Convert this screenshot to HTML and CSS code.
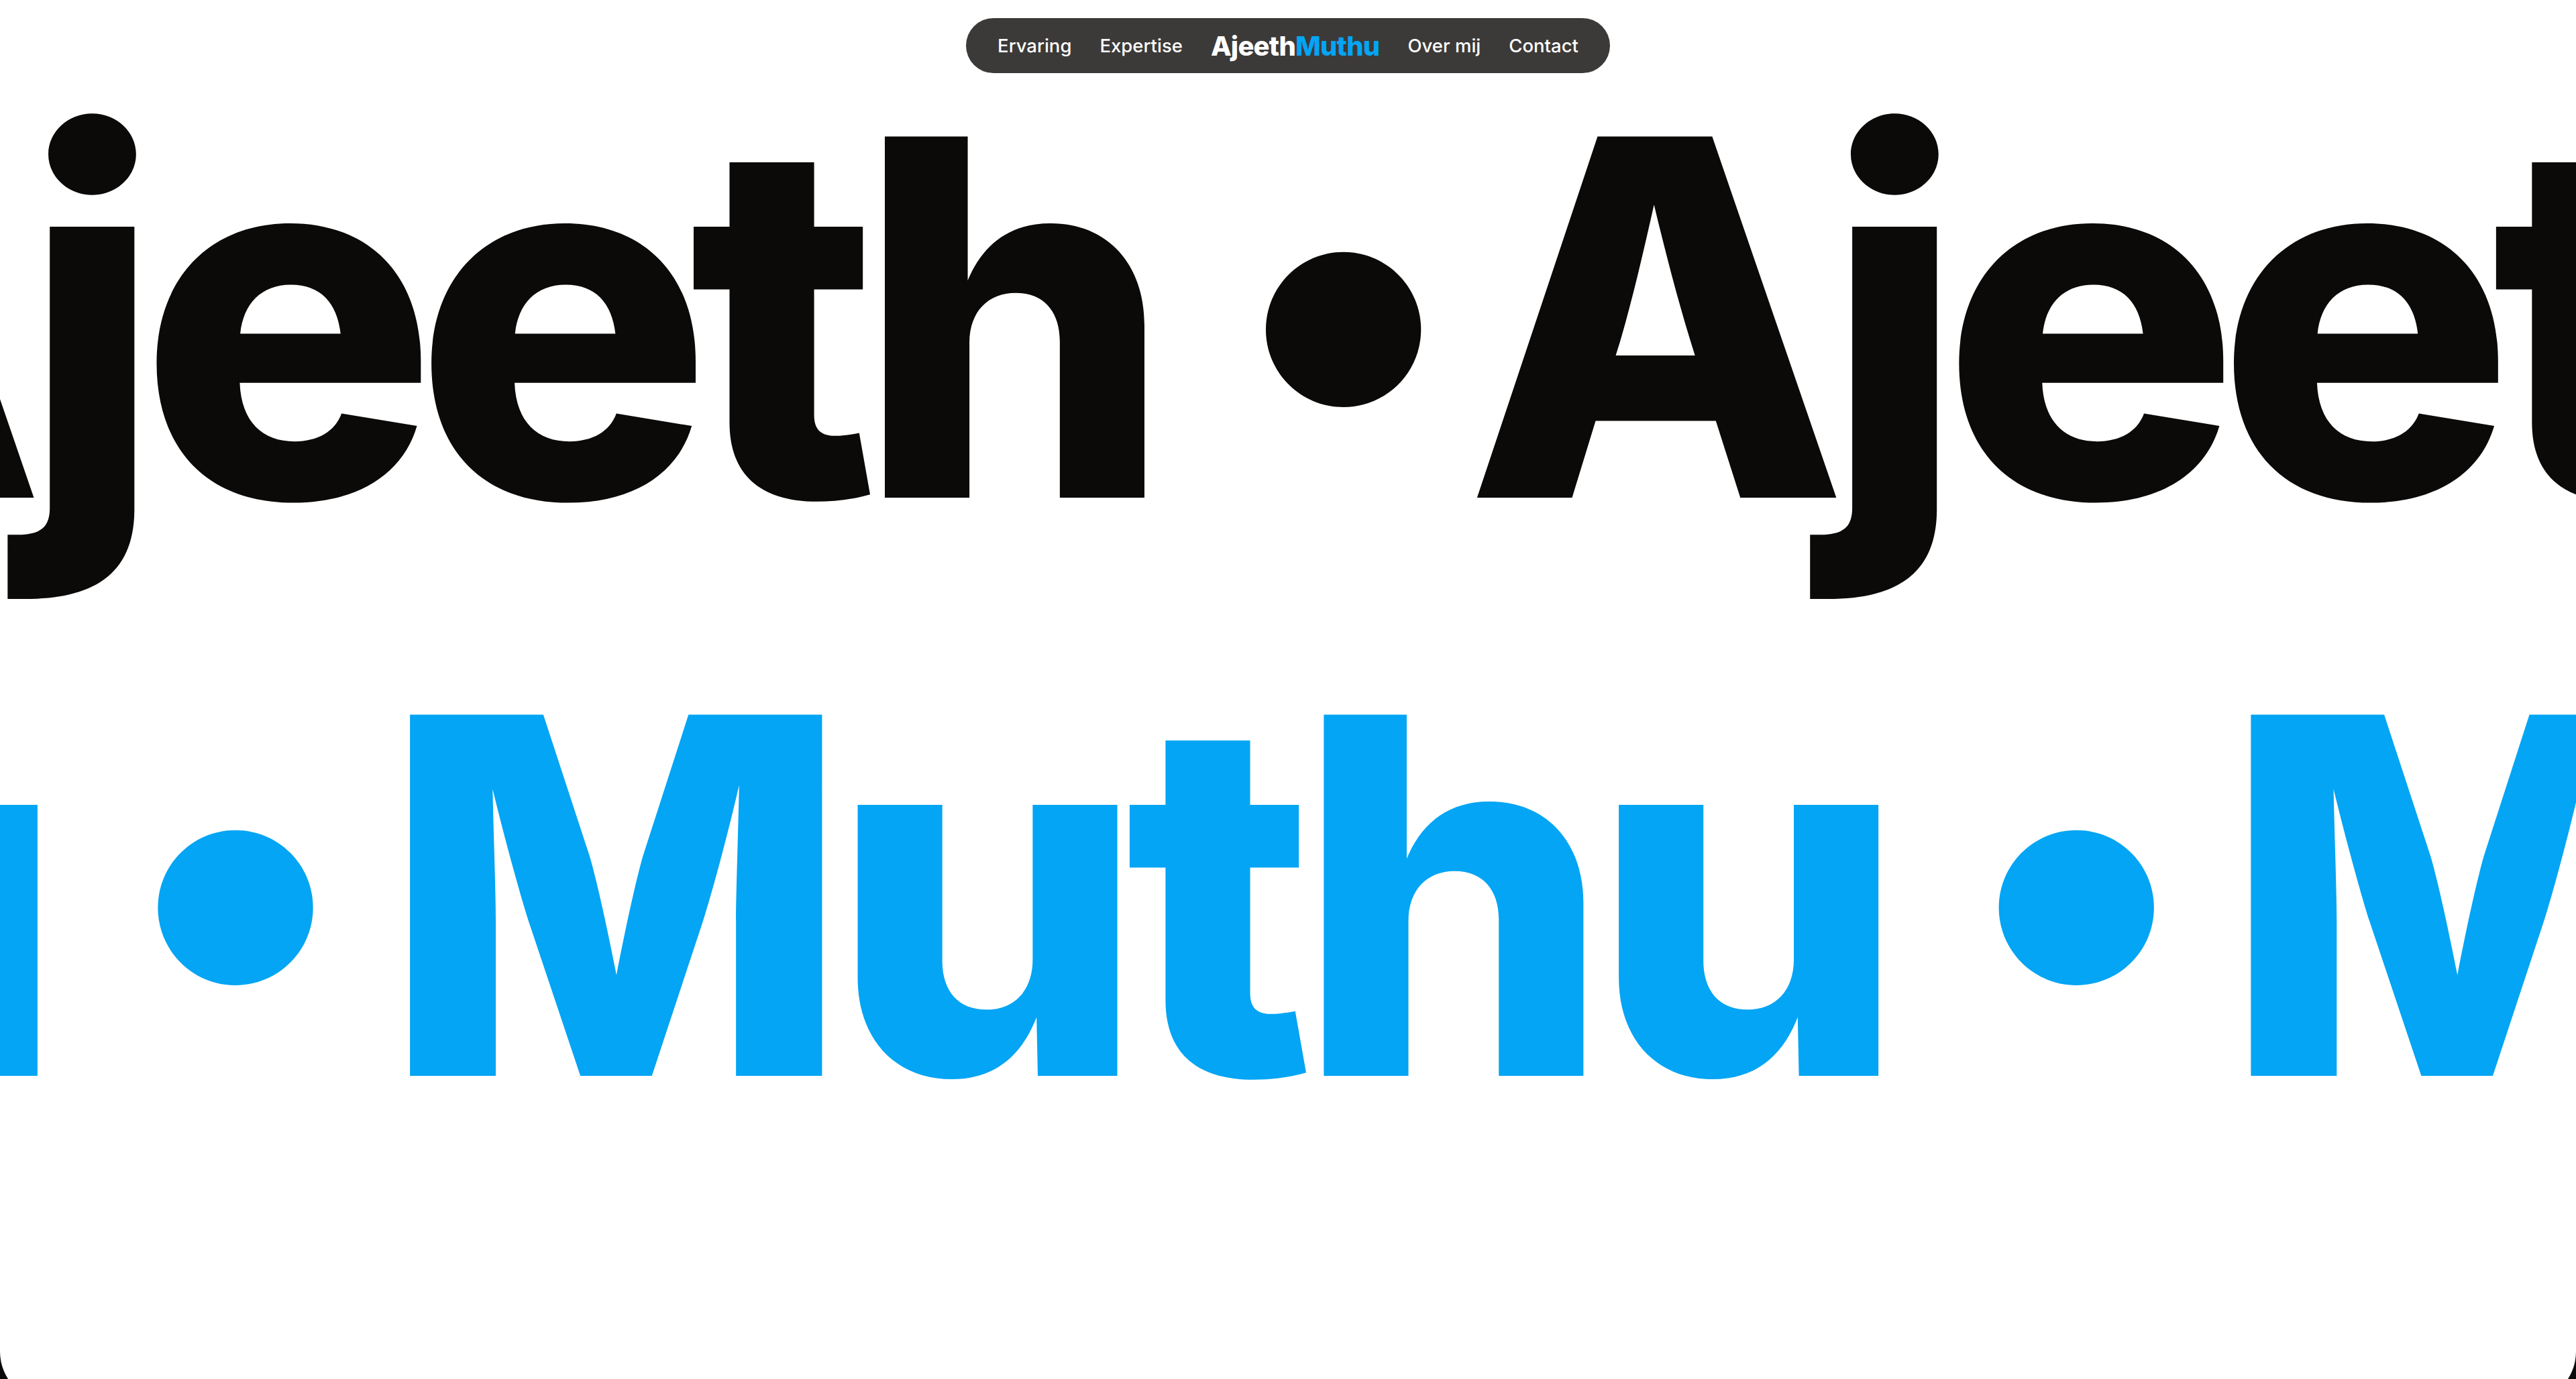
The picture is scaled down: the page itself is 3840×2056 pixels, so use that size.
FILE: index.html
```html
<!DOCTYPE html>
<html lang="nl">
<head>
<meta charset="utf-8">
<title>Ajeeth Muthu</title>
<link rel="stylesheet" href="styles.css">
</head>
<body>
<main class="page">
  <nav class="pill">
    <a class="nav-link" href="#ervaring">Ervaring</a>
    <a class="nav-link" href="#expertise">Expertise</a>
    <a class="logo" href="#top">Ajeeth<span class="logo-accent">Muthu</span></a>
    <a class="nav-link" href="#over-mij">Over mij</a>
    <a class="nav-link" href="#contact">Contact</a>
  </nav>
  <section class="hero">
    <div class="row row-first">
      <div class="track track-first">
        <span class="word">Ajeeth</span><span class="dot">•</span>
        <span class="word">Ajeeth</span><span class="dot">•</span>
        <span class="word">Ajeeth</span><span class="dot">•</span>
        <span class="word">Ajeeth</span><span class="dot">•</span>
      </div>
    </div>
    <div class="row row-second">
      <div class="track track-second">
        <span class="word">Muthu</span><span class="dot">•</span>
        <span class="word">Muthu</span><span class="dot">•</span>
        <span class="word">Muthu</span><span class="dot">•</span>
        <span class="word">Muthu</span><span class="dot">•</span>
      </div>
    </div>
  </section>
</main>
</body>
</html>
```
FILE: styles.css
```css
html, body {
  margin: 0;
  padding: 0;
  height: 2056px;
  overflow: hidden;
  background: #0b0a08;
}

.page {
  position: relative;
  height: 2091px;
  background: #ffffff;
  border-radius: 0 0 76px 76px;
  overflow: hidden;
  font-family: "Inter", "Liberation Sans", sans-serif;
}

.pill {
  position: absolute;
  top: 27px;
  left: 50%;
  transform: translateX(-50%);
  z-index: 5;
  width: 960px;
  height: 82px;
  box-sizing: border-box;
  border-radius: 41px;
  background: #3c3a38;
  display: flex;
  align-items: center;
  justify-content: center;
  gap: 42px;
}

.nav-link {
  color: #ffffff;
  text-decoration: none;
  font-size: 27.5px;
  font-weight: 500;
  letter-spacing: 0;
}

.logo {
  color: #ffffff;
  text-decoration: none;
  font-size: 40px;
  font-weight: 800;
  letter-spacing: -0.02em;
}

.logo-accent {
  color: #03a5f4;
}

.hero {
  padding-top: 42px;
}

.row {
  height: 862px;
  overflow: visible;
  white-space: nowrap;
}

.track {
  display: flex;
  align-items: baseline;
  font-size: 740px;
  line-height: 862px;
  font-weight: 800;
}

.track-first {
  color: #0b0a08;
  letter-spacing: -0.047em;
  transform: translateX(-502px);
}

.track-second {
  color: #03a5f4;
  letter-spacing: -0.041em;
  transform: translateX(-2175px);
}

.word {
  flex: none;
}

.dot {
  flex: none;
  letter-spacing: 0;
  transform: translateY(-36px);
}

.row-first .dot {
  margin: 0 20px 0 128px;
}

.row-second .dot {
  margin: 0 56px 0 122px;
}
```
